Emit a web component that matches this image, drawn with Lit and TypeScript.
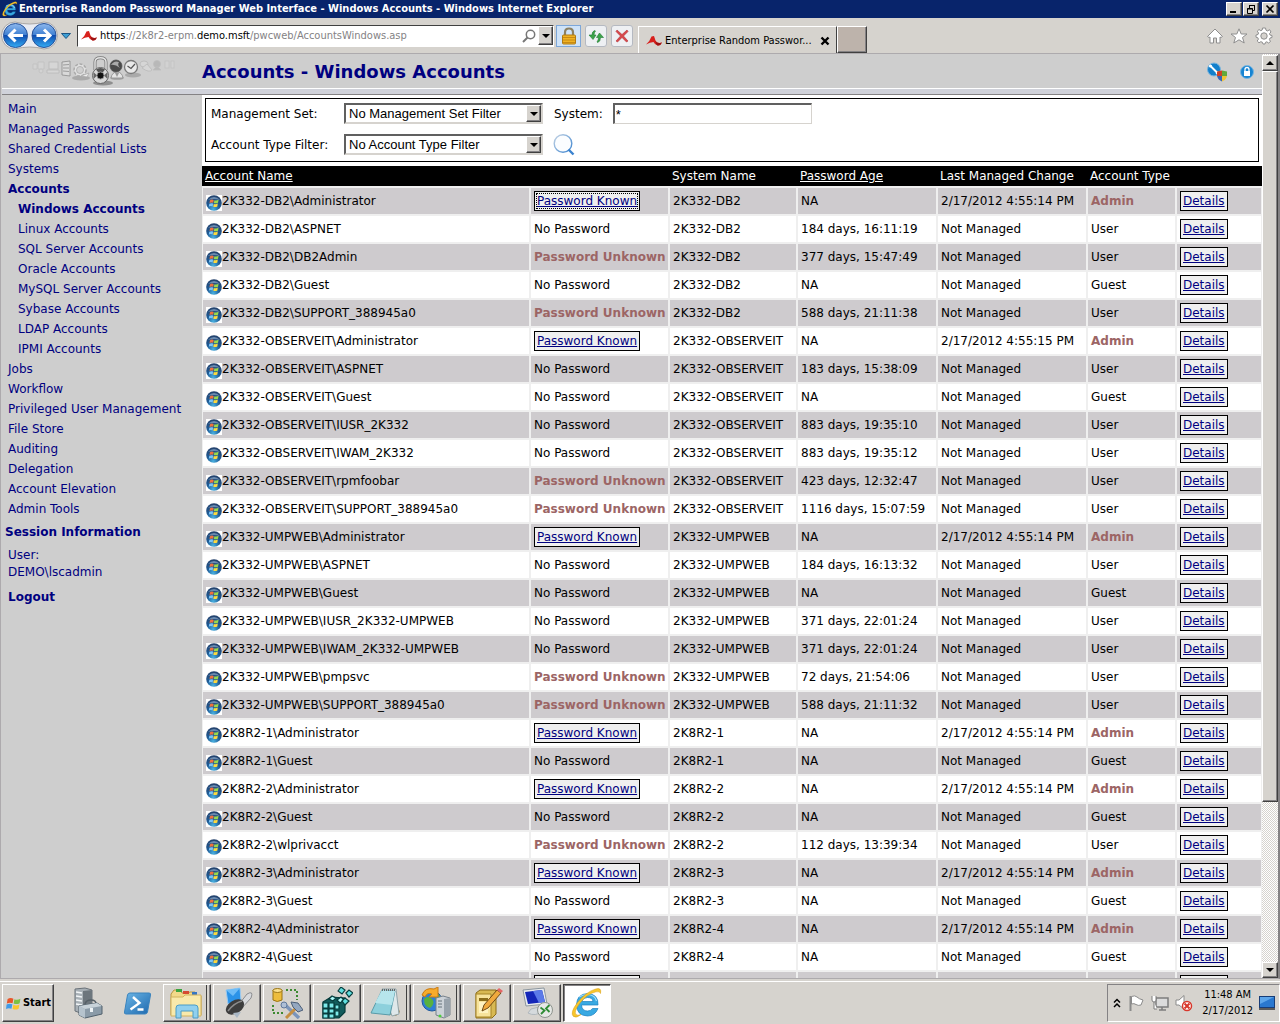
import { LitElement, html, css, svg, nothing } from "lit";
import { customElement } from "lit/decorators.js";
import { classMap } from "lit/directives/class-map.js";

type Row = [name: string, state: "K" | "N" | "U", system: string, age: string, changed: string, type: string];

const D = "2K332-DB2", O = "2K332-OBSERVEIT", W = "2K332-UMPWEB";
const NM = "Not Managed";
const T = "2/17/2012 4:55:14 PM";

const rows: Row[] = [
  ["Administrator", "K", D, "NA", T, "Admin"],
  ["ASPNET", "N", D, "184 days, 16:11:19", NM, "User"],
  ["DB2Admin", "U", D, "377 days, 15:47:49", NM, "User"],
  ["Guest", "N", D, "NA", NM, "Guest"],
  ["SUPPORT_388945a0", "U", D, "588 days, 21:11:38", NM, "User"],
  ["Administrator", "K", O, "NA", "2/17/2012 4:55:15 PM", "Admin"],
  ["ASPNET", "N", O, "183 days, 15:38:09", NM, "User"],
  ["Guest", "N", O, "NA", NM, "Guest"],
  ["IUSR_2K332", "N", O, "883 days, 19:35:10", NM, "User"],
  ["IWAM_2K332", "N", O, "883 days, 19:35:12", NM, "User"],
  ["rpmfoobar", "U", O, "423 days, 12:32:47", NM, "User"],
  ["SUPPORT_388945a0", "U", O, "1116 days, 15:07:59", NM, "User"],
  ["Administrator", "K", W, "NA", T, "Admin"],
  ["ASPNET", "N", W, "184 days, 16:13:32", NM, "User"],
  ["Guest", "N", W, "NA", NM, "Guest"],
  ["IUSR_2K332-UMPWEB", "N", W, "371 days, 22:01:24", NM, "User"],
  ["IWAM_2K332-UMPWEB", "N", W, "371 days, 22:01:24", NM, "User"],
  ["pmpsvc", "U", W, "72 days, 21:54:06", NM, "User"],
  ["SUPPORT_388945a0", "U", W, "588 days, 21:11:32", NM, "User"],
  ["Administrator", "K", "2K8R2-1", "NA", T, "Admin"],
  ["Guest", "N", "2K8R2-1", "NA", NM, "Guest"],
  ["Administrator", "K", "2K8R2-2", "NA", T, "Admin"],
  ["Guest", "N", "2K8R2-2", "NA", NM, "Guest"],
  ["wlprivacct", "U", "2K8R2-2", "112 days, 13:39:34", NM, "User"],
  ["Administrator", "K", "2K8R2-3", "NA", T, "Admin"],
  ["Guest", "N", "2K8R2-3", "NA", NM, "Guest"],
  ["Administrator", "K", "2K8R2-4", "NA", T, "Admin"],
  ["Guest", "N", "2K8R2-4", "NA", NM, "Guest"],
  ["Administrator", "K", "2K8R2-5", "NA", T, "Admin"],
];

type NavItem = { text: string; sub?: boolean; on?: boolean };
const nav: NavItem[] = [
  { text: "Main" }, { text: "Managed Passwords" }, { text: "Shared Credential Lists" }, { text: "Systems" },
  { text: "Accounts", on: true },
  { text: "Windows Accounts", sub: true, on: true },
  ...["Linux", "SQL Server", "Oracle", "MySQL Server", "Sybase", "LDAP", "IPMI"].map((t) => ({ text: `${t} Accounts`, sub: true })),
  { text: "Jobs" }, { text: "Workflow" }, { text: "Privileged User Management" }, { text: "File Store" },
  { text: "Auditing" }, { text: "Delegation" }, { text: "Account Elevation" }, { text: "Admin Tools" },
];

const icon = (w: number, h: number, body: unknown) =>
  html`<svg width=${w} height=${h} viewBox="0 0 ${w} ${h}" aria-hidden="true">${body}</svg>`;

const winFlag = svg`
  <path d="M3 4.6Q5.2 3.2 7.4 4.4L6.8 7.8Q4.6 6.8 2.4 8z" fill="#e8562a"/>
  <path d="M8.2 4.8Q10.4 5.8 12.8 4.4L12.2 7.8Q10 9 7.6 8z" fill="#7cc242"/>
  <path d="M2.2 8.8Q4.4 7.6 6.6 8.6L6 12Q3.8 11 1.8 12.2z" fill="#3f9be8"/>
  <path d="M7.4 9Q9.6 10 12 8.8L11.4 12Q9.2 13.2 6.8 12.2z" fill="#fbc62c"/>`;

const orb = icon(16, 16, svg`
  <rect width="16" height="16" fill="#fff"/>
  <defs><radialGradient id="orb" cx=".45" cy=".9" r=".9"><stop offset="0" stop-color="#48b0e0"/><stop offset=".45" stop-color="#1f5c96"/><stop offset="1" stop-color="#24406a"/></radialGradient></defs>
  <circle cx="8" cy="8" r="7.8" fill="url(#orb)"/>
  <path d="M2 5Q8-1 14 5Q8 3 2 5z" fill="#8ba7c6" opacity=".7"/>
  <path d="M4 5.2Q5.800 4 7.700 5L7.200 7.800Q5.300 7 3.500 8z" fill="#f0713c"/>
  <path d="M8.400 5.200Q10.400 6 12.600 4.800L12 7.800Q10 8.800 7.900 8z" fill="#9bd94c"/>
  <path d="M3.300 8.700Q5.200 7.800 7.100 8.600L6.600 11.400Q4.800 10.600 2.900 11.600z" fill="#7cc4f8"/>
  <path d="M7.800 8.900Q9.800 9.700 11.800 8.600L11.300 11.500Q9.300 12.500 7.300 11.700z" fill="#ffd93c"/>`);

const ieBody = svg`
  <path d="M27 18H10.5Q11 24 16.5 24 20 24 21.5 21.5H27Q24 29 16.5 29 5.5 28.500 5.500 17.500 6 7 16.500 6.500 27.500 7 27 18zM10.800 14.500H22Q21.500 10.500 16.500 10.500 11.800 10.500 10.800 14.500z" fill="#39a9e2" stroke="#1b7fc0" stroke-width=".7"/>
  <path d="M8 10Q12 7.500 17 7.500 24 8 25.500 14" fill="none" stroke="#a5e0fa" stroke-width="1.200"/>
  <path d="M2.500 29.500Q-1.500 26 6.500 15.500 15 5 24 2.200 31-.2 29.500 6.500 29 4 25 4.800 16 7 9 16 2.500 24.500 5 27.500 6.500 29 10 27.500 5.500 31.500 2.500 29.500z" fill="#f8c62c" stroke="#d59a12" stroke-width=".5"/>`;
const ieIcon = (s: number) => html`<svg width=${s} height=${s} viewBox="0 0 32 32" aria-hidden="true">${ieBody}</svg>`;

const redMark = icon(18, 12, svg`
  <path d="M1 9.500Q5 6 6.500 1.500L9 1 10.500 5.500Q11.500 9 17 7.500 15.500 11 12.500 10.500 10 10 8.500 7 5 7 1 9.500z" fill="#d8201c"/>
  <path d="M10.500 6Q12 9 17 7.500 15.500 11 12.500 10.500 10.500 9.500 10.500 6z" fill="#9c1414"/>`);

const navCircles = icon(58, 32, svg`
  <defs><linearGradient id="nc" x1="0" y1="0" x2="0" y2="1"><stop offset="0" stop-color="#8fb9ee"/><stop offset=".48" stop-color="#3e7fd2"/><stop offset=".5" stop-color="#0e4cb0"/><stop offset="1" stop-color="#35aef5"/></linearGradient></defs>
  <path d="M14 2Q29 6 43 2A13.500 13.500 0 0 1 43 29Q29 25 14 29A13.500 13.500 0 0 1 14 2z" fill="#e8ebf2" stroke="#a9a7a5"/>
  <circle cx="14.500" cy="15.500" r="12" fill="url(#nc)" stroke="#27539b"/>
  <circle cx="43" cy="15.500" r="12" fill="url(#nc)" stroke="#27539b"/>
  <path d="M22 15.500H9M14.500 9.500L8.500 15.500 14.500 21.500M35.500 15.500H48.500M43 9.500L49 15.500 43 21.500" fill="none" stroke="#fff" stroke-width="3"/>`);

const triDown = icon(8, 4, svg`<path d="M0 0H8L4 4z" fill="#000"/>`);
const triUp = icon(8, 4, svg`<path d="M0 4H8L4 0z" fill="#000"/>`);

const padlock = icon(16, 18, svg`
  <path d="M4 9V5.500Q4 1.500 8 1.500T12 5.500V9" fill="none" stroke="#8d8162" stroke-width="2.200"/>
  <rect x="1.500" y="8" width="13" height="9" rx="1" fill="#f0b323" stroke="#b07a12"/>
  <path d="M2 10.500H14M2 13H14M2 15.500H14" stroke="#c88a14"/>`);

const refresh = icon(16, 16, svg`
  <path d="M6.500 2.500Q4 3.500 4 7H1L5 11.500 8 7H6Q6 4.500 7.500 3z" fill="#3da44a" stroke="#1f7a33" stroke-width=".6"/>
  <path d="M10 14.500Q12.500 13 12.500 9.500H15.500L11.500 5 8.500 9.500H10.500Q10.500 12 9 14z" fill="#3da44a" stroke="#1f7a33" stroke-width=".6"/>`);

const stop = icon(14, 14, svg`<path d="M2 1L7 5.500 12 1 13 2.500 8.500 7 13 12 11.500 13 7 8.500 2.500 13 1 12 5.500 7 1 2.500z" fill="#d9474a" stroke="#b03338" stroke-width=".6"/>`);

const loupeGrey = icon(14, 14, svg`<circle cx="8.500" cy="5.500" r="4.200" fill="none" stroke="#777" stroke-width="1.500"/><path d="M5.500 8.500L1 13" stroke="#777" stroke-width="2"/>`);

const home = icon(16, 16, svg`<path d="M8 1L15.500 8.500 14 9.500 13 9V15H9.500V10H6.500V15H3V9L2 9.500.5 8.500z" fill="#fff" stroke="#8e8e8e"/>`);
const star = icon(18, 16, svg`<path d="M9 .8L11.200 6H17L12.500 9.500 14.200 15 9 11.800 3.800 15 5.500 9.500 1 6H6.800z" fill="#fff" stroke="#8e8e8e"/>`);
const gear = icon(18, 18, svg`
  <path d="M7.500 1H10.500L11 3.200 12.600 3.900 14.600 2.700 16 5 14.500 6.500 15 8 17 8.500V10.500L15 11 14.400 12.500 15.500 14.500 13.500 16 11.800 14.800 10.500 15.300 10 17H8L7.300 15.200 5.800 14.700 4 15.800 2.200 14 3.400 12.200 2.900 10.800 1 10.200V8L3 7.500 3.500 6 2.300 4.200 4 2.500 5.800 3.700 7.200 3z" fill="#fff" stroke="#8e8e8e"/>
  <circle cx="9" cy="9" r="3.200" fill="#d6d3ce" stroke="#8e8e8e"/>`);

const banner = icon(146, 32, svg`
  <g fill="#d9d9d9" stroke="#b5b5b5" stroke-width=".8">
    <g opacity=".5"><path d="M4 8H8V13H4zM9 6H15V13H9z"/><circle cx="12" cy="15" r="2"/></g>
    <g opacity=".8"><rect x="20" y="6" width="9" height="7"/><path d="M18 14H30V17H18z"/></g>
    <g stroke="#8c8c8c"><path d="M33 6L41 5V20L33 19z"/><path d="M34 9L40 8.500M34 12H40M34 15L40 15.500"/></g>
    <g stroke="#aaa"><ellipse cx="52" cy="22" rx="9" ry="2.500" fill="#aaa" stroke="none"/><circle cx="51" cy="14" r="6" fill="#e2e2e2" stroke-dasharray="3 1.500" stroke-width="1.500"/><circle cx="51" cy="14" r="3.500" fill="#d0d0d0"/><path d="M52 20L60 17 58 21z" fill="#eee"/></g>
    <ellipse cx="88" cy="22" rx="7" ry="2" fill="#aaa" stroke="none"/>
    <path d="M82 22Q83 16 88 16T94 22z" fill="#e4e4e4" stroke="#888"/><path d="M86 17L88 21 90 17z" fill="#999" stroke="none"/>
    <circle cx="87" cy="10" r="6" fill="#4a4a4a" stroke="#555"/><path d="M82 9Q85 4 90 6Q88 9 91 12Q86 8 82 9z" fill="#aaa" stroke="none"/>
    <ellipse cx="104" cy="19" rx="8" ry="2.500" fill="#aaa" stroke="none"/>
    <circle cx="102" cy="11" r="6.500" fill="#e9e9e9" stroke="#7a7a7a" stroke-width="1.300"/><path d="M98.500 10L102 12.500 106 8" fill="none" stroke="#555" stroke-width="1.200"/>
    <g opacity=".8"><ellipse cx="115" cy="8" rx="4" ry="3"/><path d="M113 12Q120 17 123 14L118 8z"/></g>
    <g opacity=".6" fill="#aaa"><circle cx="128" cy="8" r="3.500"/><path d="M124 14H132L129 11H127z"/></g>
    <g opacity=".4"><rect x="136" y="5" width="4" height="7"/><rect x="142" y="5" width="3" height="7"/></g>
  </g>
  <ellipse cx="74" cy="27" rx="10" ry="2.500" fill="#8f8f8f"/>
  <path d="M66 14V6Q66 1.800 71.500 1.800T77 6V14" fill="none" stroke="#777" stroke-width="3"/>
  <path d="M66 14V6Q66 1.800 71.500 1.800T77 6V14" fill="none" stroke="#e4e4e4" stroke-width="1.400"/>
  <circle cx="71.500" cy="19.500" r="8" fill="#d8d8d8" stroke="#666"/>
  <path d="M64.500 16L68 19.500 64.500 23zM78.500 16L75 19.500 78.500 23z" fill="#666"/><path d="M67 13.500Q71.500 10.500 76 13.500L74 16H69z" fill="#555"/>
  <circle cx="71.500" cy="19.500" r="3.600" fill="#111" stroke="#999"/>`);

const toolIcon = icon(22, 20, svg`
  <circle cx="8" cy="7.500" r="6.500" fill="#1380cc" stroke="#78b5df"/>
  <path d="M4 3.500L11 10.500" stroke="#fff" stroke-width="2"/><circle cx="4.500" cy="4" r="1.600" fill="#fff"/><circle cx="11.500" cy="11" r="1.800" fill="#fff"/>
  <path d="M11 9.500L16 8.500V14H11z" fill="#cf4326"/><path d="M16 8.500L21 9.500V14H16z" fill="#60a93c"/>
  <path d="M11 14H16V19.500Q12 18 11 14z" fill="#3565b8"/><path d="M16 14H21Q20 18 16 19.500z" fill="#f1c335"/>`);
const lockIcon = icon(14, 14, svg`
  <circle cx="7" cy="7" r="6.500" fill="#1684d2" stroke="#78b5df"/>
  <path d="M5 6V4.500Q5 2.500 7 2.500T9 4.500V6" fill="none" stroke="#fff" stroke-width="1.300"/><rect x="4" y="6" width="6" height="5" fill="#fff"/>`);

const loupeBlue = icon(22, 22, svg`
  <defs><linearGradient id="lb" x1="0" y1="0" x2="1" y2="1"><stop offset="0" stop-color="#c5d4e4"/><stop offset="1" stop-color="#3b83cf"/></linearGradient></defs>
  <circle cx="10" cy="9.500" r="8.800" fill="#fbfdff" stroke="url(#lb)" stroke-width="1.400"/>
  <path d="M15.500 15.500L20.500 20.500" stroke="#3b83cf" stroke-width="2.400"/>`);

const serverTools = icon(32, 32, svg`
  <path d="M3 2L13 1 20 3V23L11 27 3 24z" fill="#a8b0b6" stroke="#697178"/><path d="M11 4L20 3V23L11 27z" fill="#6d767d"/>
  <path d="M4 5L10 6M4 9L10 10M4 13L10 14M4 17L10 18" stroke="#f2f5f7" stroke-width="1.500"/>
  <path d="M13 17Q14 13 19 13T24 17" fill="none" stroke="#566068" stroke-width="1.500"/>
  <path d="M7 19L25 16 30 19V27L13 31 7 28z" fill="#8b9ba8" stroke="#51606c"/><path d="M7 19L13 22V31L7 28z" fill="#b6c3cd"/><path d="M7 19L25 16 30 19 13 22z" fill="#c8d2d9"/>
  <rect x="18" y="21" width="3" height="4" fill="#eef3f6"/>`);
const powershell = icon(32, 32, svg`
  <defs><linearGradient id="ps" x1="0" y1="0" x2="1" y2="1"><stop offset="0" stop-color="#6cb6e6"/><stop offset="1" stop-color="#1d68ae"/></linearGradient></defs>
  <path d="M8 6H27Q29 6 28.500 8L25.500 25Q25 27 23 27H4Q2 27 2.500 25L5.500 8Q6 6 8 6z" fill="url(#ps)" stroke="#3a83bd"/>
  <path d="M11 10L17.500 16 8.500 22.500M15.500 22.500H21.500" fill="none" stroke="#fff" stroke-width="2.400"/>`);
const folder = icon(36, 32, svg`
  <path d="M3 7L6 3H12L14 6H20L22 5H27L29 9H33V28H3z" fill="#f2d98a" stroke="#b79542"/>
  <rect x="8" y="2" width="6" height="3" fill="#3ba53f"/><rect x="15" y="4" width="6" height="3" fill="#d64a31"/><rect x="24" y="5" width="5" height="3" fill="#3575c4"/>
  <path d="M3 10H15L17 8H33V29H3z" fill="#f9e9ab" stroke="#d1b25e"/>
  <path d="M8 31V21Q8 18 11 18H27Q30 18 30 21V31H25V24H13V31z" fill="#91d0ee" stroke="#4b9cc6"/>`);
const driveTool = icon(32, 32, svg`
  <path d="M5 3L19 1 20 14 7 17z" fill="#2b93e8" stroke="#9ccbf0"/><path d="M5 3L19 1 12 9z" fill="#6dbcf7"/>
  <path d="M26 7Q33 3 30 11L20 22 12 25z" fill="#d8dadd" stroke="#8b8d90"/>
  <ellipse cx="14" cy="20" rx="10" ry="6.500" transform="rotate(-32 14 20)" fill="#3d3d3d"/><path d="M7 24Q13 16 21 14" stroke="#8c8c8c" fill="none" stroke-width="1.500"/>
  <path d="M12 26L16 31 20 25z" fill="#a9b7c5"/>`);
const dbTools = icon(32, 32, svg`
  <path d="M2 3V13Q6 16 11 13V3z" fill="#edbd3d" stroke="#9b7413"/><ellipse cx="6.500" cy="3.500" rx="4.500" ry="2" fill="#fbe08c" stroke="#9b7413"/>
  <path d="M15 3H26V13M2 18V26H13" fill="none" stroke="#3d8a31" stroke-width="2" stroke-dasharray="2 2"/>
  <path d="M12 16L28 31" stroke="#7b95bb" stroke-width="3.500"/><circle cx="13" cy="18" r="3" fill="#aebfd6" stroke="#5f789b"/>
  <path d="M15 31L26 20" stroke="#c68f42" stroke-width="3"/><path d="M20 15L27 16 32 23 27 25 22 20z" fill="#94a7c0" stroke="#4c5f79"/>`);
const regedit = icon(32, 32, svg`
  <g stroke="#063c3c" stroke-width="1.200"><path d="M2 15L10 10 24 11V25L18 31H2z" fill="#125c5c"/>
  <path d="M2 16H7V21H2zM8 16H13V21H8zM2 22H7V26H2zM8 22H13V26H8zM2 27H7V31H2zM8 27H13V31H8zM14 18H18V22H14zM14 24H18V29H14z" fill="#7ceaea"/>
  <path d="M8 12L11 9 15 11 12 14zM16 13L20 10 23 13 19 16z" fill="#aefafa"/>
  <path d="M17 4L20 0 24 3 21 7zM25 6L28 3 32 6 28 10zM21 14L24 11 28 14 24 18z" fill="#5fdede"/></g>`);
const notepad = icon(32, 32, svg`
  <path d="M22 4L30 25 26 29 18 27z" fill="#a98d5d"/><path d="M12 2H26L29 27 22 29z" fill="#dfe8ea" stroke="#93a5aa"/>
  <path d="M12 3L25 4 20 28 1 26z" fill="#8dd0dc" stroke="#599ba9"/><path d="M12 3L25 4 22 18 5 16z" fill="#b7e5ec"/>
  <path d="M12 3H26" stroke="#666" stroke-width="2" stroke-dasharray="1 1"/>`);
const iis = icon(32, 32, svg`
  <circle cx="12" cy="14" r="10" fill="#2f7fd6" stroke="#205a9d"/><path d="M4 12Q8 8 12 12T10 21Q4 20 4 12zM14 6Q20 6 21 12L16 14z" fill="#58b13f"/>
  <path d="M2 8Q5 0 14 2L18 0V10H9L12 7Q7 5 5 10z" fill="#f7ac2c" stroke="#ca7a12"/>
  <path d="M16 11L23 9 30 11V28L24 31 16 28z" fill="#ccd2d8" stroke="#77818a"/><path d="M24 12L30 11V28L24 31z" fill="#98a2ab"/><path d="M18 14H22M18 17H22M18 20H22" stroke="#67727b"/><circle cx="20" cy="29" r="1.500" fill="#4ccf3a"/>`);
const editor = icon(32, 32, svg`
  <path d="M5 6L9 3H25V27L21 31H5z" fill="#d8b952" stroke="#8b6d1a"/><path d="M5 7H20V30H5z" fill="#f7e39a" stroke="#a68427"/>
  <path d="M8 11H17V14H8z" fill="#8b6d1a"/><path d="M8 15H17V26H8z" fill="#fff3c0"/>
  <path d="M11 24L13 18 26 3 30 6 17 21z" fill="#f0a93d" stroke="#704b16"/><path d="M26 3L28 1 32 4 30 6z" fill="#e46767"/>`);
const remote = icon(32, 32, svg`
  <path d="M2 3L23 1 26 17 5 19z" fill="#e8ecef" stroke="#8c969e"/><path d="M4 5L21 3 24 15 7 17z" fill="#1426b8"/><path d="M12 4L21 3 24 15 18 16z" fill="#5b7ae8"/>
  <path d="M10 22L18 20 22 24Q14 30 7 26z" fill="#d5dadd" stroke="#b0b8bd"/>
  <circle cx="24" cy="23" r="7.500" fill="#e6e8e6" stroke="#8e948e"/><path d="M19.500 20.500L23.500 23.500 20 27M28.500 18L25 21.500 28.500 25" fill="none" stroke="#2f8c35" stroke-width="1.800"/>`);

const startFlag = html`<svg width="17" height="17" viewBox="1 2 13 12" aria-hidden="true">${winFlag}</svg>`;
const flag = icon(18, 18, svg`<path d="M3.500 17V2" stroke="#8b8b8b" stroke-width="2"/><path d="M4.500 2.500Q8 1 10 3T16 6L14 11Q11 12 9 10.500T4.500 10z" fill="#fff" stroke="#8b8b8b"/>`);
const net = icon(18, 18, svg`<rect x="5" y="4" width="12" height="9" fill="#dcdcdc" stroke="#7d7d7d" stroke-width="1.500"/><path d="M8 16H15M11 13V16" stroke="#7d7d7d" stroke-width="1.500"/><path d="M1 2V6Q1 8 3 8T5 6V2M3 8V15H6" fill="#fff" stroke="#7d7d7d"/>`);
const mute = icon(18, 18, svg`<path d="M1 6H4L9 1.500V15L4 11H1z" fill="#fff" stroke="#8b8b8b"/><circle cx="12" cy="12" r="4.500" fill="#fff" stroke="#d8362a" stroke-width="1.500"/><path d="M9.500 9.500L14.500 14.500M14.500 9.500L9.500 14.500" stroke="#d8362a" stroke-width="2"/>`);
const chevrons = icon(8, 10, svg`<path d="M1 4.500L4 1.500 7 4.500M1 9L4 6 7 9" fill="none" stroke="#000" stroke-width="1.500"/>`);
const desktop = icon(16, 16, svg`<rect x=".5" y="1.500" width="15" height="11" fill="#2a78cf" stroke="#173d78"/><path d="M1 2H15L1 9z" fill="#5ea6ea"/><path d="M0 14H16" stroke="#333" stroke-width="1.500"/>`);

const tasks: { label: string; pic: unknown; group?: boolean; active?: boolean }[] = [
  { label: "Windows Explorer", pic: folder, group: true },
  { label: "Disk tool", pic: driveTool },
  { label: "Management Studio", pic: dbTools },
  { label: "Registry Editor", pic: regedit },
  { label: "Notepad", pic: notepad, group: true },
  { label: "IIS Manager", pic: iis, group: true },
  { label: "Editor", pic: editor },
  { label: "Remote Desktop", pic: remote },
  { label: "Internet Explorer", pic: ieIcon(32), active: true },
];

@customElement("app-root")
export class AppRoot extends LitElement {
  static styles = css`
    :host { display: flex; flex-direction: column; height: 100vh; overflow: hidden; background: #d6d3ce; color: #000;
      font: 11px/16px "DejaVu Sans Condensed", "DejaVu Sans", sans-serif; }
    * { box-sizing: border-box; }
    svg { display: block; flex: none; }
    button { font: inherit; color: inherit; padding: 0; margin: 0; border: 0; background: none; display: flex; align-items: center; justify-content: center; flex: none; }
    .raised { border: 1px solid; border-color: #fff #404040 #404040 #fff; box-shadow: inset -1px -1px #848284; background: #d6d3ce; }

    .titlebar { flex: none; height: 18px; display: flex; align-items: center; gap: 1px; padding: 0 2px; background: #08246b; color: #fff; font-weight: bold; }
    .titlebar h1 { flex: 1; margin: 0; font: inherit; white-space: nowrap; overflow: hidden; }
    .winbtn { width: 16px; height: 14px; color: #000; }
    .close { margin-left: 2px; }

    .toolbar { flex: none; height: 36px; display: flex; align-items: center; padding: 0 7px 0 1px; border-bottom: 1px solid #adaaad; }
    .history { width: 58px; }
    .recent { width: 14px; }
    .address { flex: none; width: 477px; height: 22px; margin-left: 4px; display: flex; align-items: center; background: #fff; border: 1px solid; border-color: #404040 #fff #fff #404040; padding-left: 2px; }
    .url { flex: 1; display: flex; padding-left: 2px; color: #848284; white-space: nowrap; }
    .url b { font-weight: normal; color: #000; }
    .drop { width: 15px; height: 19px; margin-left: 2px; }
    .secure { width: 25px; height: 22px; margin-left: 2px; background: #cfe3f8; border: 1px solid #7da7d9; }
    .tool { width: 22px; height: 22px; margin-left: 4px; background: #eef0f3; border: 1px solid #b5b9c1; border-radius: 3px; }
    .tabs { display: flex; align-self: flex-end; margin-left: 5px; }
    .tab { width: 199px; height: 27px; display: flex; align-items: center; gap: 2px; padding: 2px 6px 0; border: 1px solid; border-color: #fff #404040 transparent #fff; border-bottom: 0; white-space: nowrap; }
    .tab span { flex: 1; }
    .newtab { width: 30px; height: 27px; background: #bdb3ab; }
    .spacer { flex: 1; }
    .corner { display: flex; align-items: center; gap: 7px; }

    .viewport { flex: 1; min-height: 0; display: flex; padding-left: 1px; background: #cecece; border-left: 1px solid #adaaad; border-right: 2px solid #848284; border-bottom: 1px solid #adaaad; }
    .page { flex: 1; min-width: 0; display: flex; flex-direction: column; overflow: hidden; font: 12px/16px "DejaVu Sans", sans-serif; }
    .masthead { flex: none; height: 41px; display: flex; align-items: center; background: #cecece; border-bottom: 1px solid #848284; }
    .masthead-row { flex: 1; align-self: stretch; display: flex; align-items: center; padding-right: 8px; border-bottom: 5px solid #d0d2da; box-shadow: inset 0 -1px #fff; }
    .logo { width: 200px; flex: none; padding-left: 27px; }
    .masthead h2 { flex: 1; margin: 0; font-size: 18px; line-height: 24px; color: #000080; }
    .quick { display: flex; align-items: center; gap: 12px; }
    .body { flex: 1; min-height: 0; display: flex; }

    .side { flex: none; width: 200px; padding: 4px 0 0 6px; color: #000080; }
    .side ul { list-style: none; margin: 0; padding: 0; }
    .side li { height: 20px; line-height: 20px; white-space: nowrap; }
    .side a { color: inherit; text-decoration: none; }
    .side .sub { padding-left: 10px; }
    .side .on { font-weight: bold; }
    .side h3 { margin: 5px 0 7px -3px; font-size: 12px; line-height: 16px; }
    .side p { margin: 0 0 8px; line-height: 17px; }
    .logout { font-weight: bold; }

    .main { flex: 1; min-width: 0; background: #fff; overflow: hidden; }
    .filters { margin: 3px 3px 4px; height: 64px; padding: 4px 5px 0; border: 1px solid #000; display: grid; grid-template-columns: 133px 199px auto 199px; grid-auto-rows: 21px; row-gap: 10px; align-items: center; align-content: start; justify-content: start; }
    .filters .gap { padding: 0 10px 0 11px; }
    .field { font: 13px/17px "Liberation Sans", Arial, sans-serif; height: 21px; width: 100%; color: #000; background: #fff; border: 2px solid; border-color: #606060 #d6d3ce #d6d3ce #606060; border-radius: 0; margin: 0; padding: 0 3px; appearance: none; outline: none; }
    input.field { border-width: 2px 1px 1px 2px; padding: 0 1px; }
    .picker { position: relative; display: block; }
    .picker .arrow { position: absolute; top: 2px; right: 2px; width: 15px; height: 17px; display: flex; align-items: center; justify-content: center; pointer-events: none; }
    .search { margin-left: 10px; justify-self: start; }

    table { width: 100%; table-layout: fixed; border-collapse: separate; border-spacing: 0; }
    th { height: 22px; padding: 0 2px; background: #000; color: #fff; font-weight: normal; text-align: left; border-bottom: 2px solid #efefef; white-space: nowrap; }
    th:first-child { padding-left: 3px; }
    th a { color: #fff; }
    td { height: 28px; padding: 0 3px; border-right: 2px solid #efefef; border-bottom: 2px solid #efefef; white-space: nowrap; }
    td:first-child { border-left: 1px solid #efefef; }
    td:last-child { border-right-width: 1px; }
    tr:nth-child(odd) td { background: #cecbce; }
    .acct { display: flex; align-items: center; }
    .acct svg { margin-top: 4px; }
    .alert { color: #9c6565; font-weight: bold; }
    .box { display: inline-block; height: 20px; line-height: 18px; padding: 0 2px; border: 1px solid #000; background: #efefef; color: #000080; }
    .focused span { outline: 1px dotted #000; }
    .c2 { width: 139px; } .c3 { width: 128px; } .c4 { width: 140px; } .c5 { width: 150px; } .c6 { width: 89px; } .c7 { width: 85px; }

    .scroll { flex: none; width: 16px; display: flex; flex-direction: column; padding-top: 1px; background: repeating-conic-gradient(#fff 0 25%, #d6d3ce 0 50%) 0 0 / 2px 2px; }
    .scroll button { height: 16px; }
    .track { flex: 1; }
    .thumb { height: 82%; }

    .taskbar { flex: none; height: 45px; display: flex; align-items: center; padding-top: 3px; box-shadow: inset 0 2px #d6d3ce, inset 0 3px #fff; }
    .start { width: 52px; height: 38px; margin-left: 2px; gap: 1px; font-weight: bold; }
    .pins { display: flex; gap: 18px; padding: 0 9px 0 18px; }
    .tasks { display: flex; gap: 2px; }
    .task { width: 48px; height: 38px; }
    .group { box-shadow: inset -1px -1px #848284, inset -3px 0 #d6d3ce, inset -4px 0 #404040; padding-right: 3px; }
    .active { background: #fff; border-color: #404040 #fff #fff #404040; box-shadow: inset 1px 1px #848284; }
    .tray { height: 38px; display: flex; align-items: center; gap: 6px; padding: 0 4px 0 5px; border: 1px solid; border-color: #848284 #fff #fff #848284; text-align: center; }
    .clock { padding-left: 3px; }
  `;

  private status(s: string, i: number) {
    if (s === "N") return "No Password";
    if (s === "U") return html`<span class="alert">Password Unknown</span>`;
    return html`<a href="#password" class=${classMap({ box: true, focused: i === 0 })}><span>Password Known</span></a>`;
  }

  private select(id: string, text: string) {
    return html`<span class="picker"><select class="field" id=${id}><option>${text}</option></select><span class="arrow raised">${triDown}</span></span>`;
  }

  render() {
    return html`
      <header class="titlebar">
        ${ieIcon(16)}
        <h1>Enterprise Random Password Manager Web Interface - Windows Accounts - Windows Internet Explorer</h1>
        <button class="winbtn raised" aria-label="Minimize">${icon(10, 10, svg`<path d="M1 8H7" stroke="#000" stroke-width="2"/>`)}</button>
        <button class="winbtn raised" aria-label="Restore">${icon(10, 10, svg`<path d="M3.500 4V1.500H8.500V6.500H7M3 1.500H9" fill="none" stroke="#000"/><path d="M1.500 4.500H6.500V9.500H1.500zM1 5H7" fill="none" stroke="#000"/>`)}</button>
        <button class="winbtn raised close" aria-label="Close">${icon(10, 10, svg`<path d="M1.500 1.500L8.500 8.500M8.500 1.500L1.500 8.500" stroke="#000" stroke-width="1.700"/>`)}</button>
      </header>

      <nav class="toolbar" aria-label="Browser">
        <button class="history" aria-label="Back and forward">${navCircles}</button>
        <button class="recent" aria-label="Recent pages">${icon(10, 6, svg`<path d="M.5.5H9.500L5 5.500z" fill="#3e9fd4" stroke="#1c5585"/>`)}</button>
        <div class="address">${redMark}<div class="url"><b>https</b>://2k8r2-erpm.<b>demo.msft</b>/pwcweb/AccountsWindows.asp</div>${loupeGrey}
          <button class="drop raised" aria-label="Show addresses">${triDown}</button></div>
        <button class="secure" aria-label="Security report">${padlock}</button>
        <button class="tool" aria-label="Refresh">${refresh}</button>
        <button class="tool" aria-label="Stop">${stop}</button>
        <div class="tabs">
          <div class="tab">${redMark}<span>Enterprise Random Passwor...</span>
            <button aria-label="Close tab">${icon(10, 10, svg`<path d="M1.500 1.500L8.500 8.500M8.500 1.500L1.500 8.500" stroke="#000" stroke-width="2.400"/>`)}</button></div>
          <button class="newtab raised" aria-label="New tab"></button>
        </div>
        <div class="spacer"></div>
        <div class="corner">
          <button aria-label="Home">${home}</button><button aria-label="Favorites">${star}</button><button aria-label="Tools">${gear}</button>
        </div>
      </nav>

      <div class="viewport">
        <div class="page">
          <div class="masthead"><div class="masthead-row">
            <div class="logo">${banner}</div>
            <h2>Accounts - Windows Accounts</h2>
            <div class="quick"><button aria-label="Settings">${toolIcon}</button><button aria-label="Lock">${lockIcon}</button></div>
          </div></div>
          <div class="body">
            <aside class="side">
              <ul>${nav.map((n) => html`<li class=${classMap({ sub: !!n.sub, on: !!n.on })}><a href="#nav">${n.text}</a></li>`)}</ul>
              <h3>Session Information</h3>
              <p>User:<br />DEMO\\lscadmin</p>
              <a class="logout" href="#logout">Logout</a>
            </aside>
            <main class="main">
              <form class="filters">
                <label for="set">Management Set:</label>${this.select("set", "No Management Set Filter")}
                <label class="gap" for="system">System:</label><input class="field" id="system" value="*" />
                <label for="type">Account Type Filter:</label>${this.select("type", "No Account Type Filter")}
                <button class="search" type="button" aria-label="Search">${loupeBlue}</button>
              </form>
              <table>
                <colgroup><col />${[2, 3, 4, 5, 6, 7].map((n) => html`<col class="c${n}" />`)}</colgroup>
                <thead><tr>
                  <th><a href="#name">Account Name</a></th><th></th><th>System Name</th><th><a href="#age">Password Age</a></th>
                  <th>Last Managed Change</th><th>Account Type</th><th></th>
                </tr></thead>
                <tbody>${rows.map(([name, s, sys, age, changed, type], i) => html`<tr>
                  <td><div class="acct">${orb}${sys}\\${name}</div></td>
                  <td>${this.status(s, i)}</td><td>${sys}</td><td>${age}</td><td>${changed}</td>
                  <td>${type === "Admin" ? html`<span class="alert">Admin</span>` : type}</td>
                  <td><a class="box" href="#details">Details</a></td>
                </tr>`)}</tbody>
              </table>
            </main>
          </div>
        </div>
        <div class="scroll">
          <button class="raised" aria-label="Scroll up">${triUp}</button>
          <div class="track"><div class="thumb raised"></div></div>
          <button class="raised" aria-label="Scroll down">${triDown}</button>
        </div>
      </div>

      <footer class="taskbar">
        <button class="start raised">${startFlag}Start</button>
        <div class="pins"><button aria-label="Server Manager">${serverTools}</button><button aria-label="PowerShell">${powershell}</button></div>
        <div class="tasks">${tasks.map((t) => html`<button aria-label=${t.label} class=${classMap({ task: true, raised: true, group: !!t.group, active: !!t.active })}>${t.pic ?? nothing}</button>`)}</div>
        <div class="spacer"></div>
        <div class="tray">${chevrons}${flag}${net}${mute}<div class="clock">11:48 AM<br />2/17/2012</div>${desktop}</div>
      </footer>`;
  }
}
